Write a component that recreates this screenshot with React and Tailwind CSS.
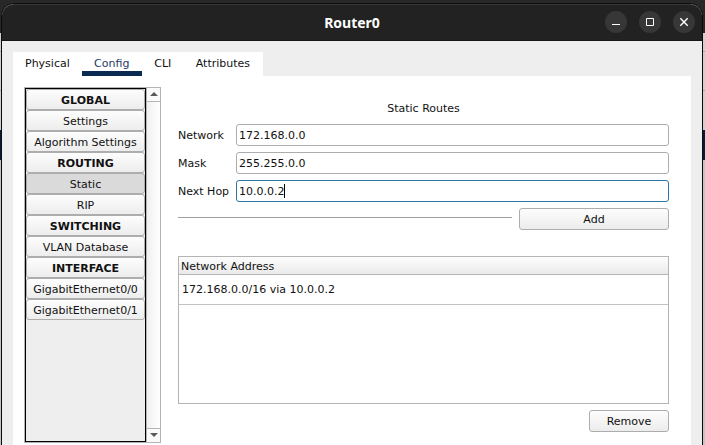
import React, { useState } from "react";

const sections = [
  { title: "GLOBAL", items: ["Settings", "Algorithm Settings"] },
  { title: "ROUTING", items: ["Static", "RIP"] },
  { title: "SWITCHING", items: ["VLAN Database"] },
  { title: "INTERFACE", items: ["GigabitEthernet0/0", "GigabitEthernet0/1"] },
];

const tabs = ["Physical", "Config", "CLI", "Attributes"];

function WindowButton({ label, children }) {
  return (
    <button aria-label={label} className="flex size-[22px] items-center justify-center rounded-full bg-[#373737]">
      <svg width="10" height="10" viewBox="0 0 10 10" fill="none" stroke="#fff">
        {children}
      </svg>
    </button>
  );
}

function TitleBar() {
  return (
    <header className="grid h-[37px] grid-cols-[1fr_auto_1fr] items-center rounded-t-[12px] border-t border-b border-t-[#383838] border-b-[#161616] bg-[#222222] px-[7px] pb-0.5">
      <span />
      <h1 className="pt-0.5 font-['Noto_Sans',sans-serif] text-[14px] leading-5 font-bold text-white">Router0</h1>
      <div className="flex justify-end gap-3">
        <WindowButton label="Minimize">
          <path d="M1 7.5H9" />
        </WindowButton>
        <WindowButton label="Maximize">
          <path d="M1.5 1.5H8.5V8.5H1.5Z" />
        </WindowButton>
        <WindowButton label="Close">
          <path d="M1.3 1.3L8.7 8.7M8.7 1.3L1.3 8.7" strokeWidth="1.4" />
        </WindowButton>
      </div>
    </header>
  );
}

function Tabs() {
  return (
    <nav className="flex h-6 w-[250px] bg-white">
      {tabs.map((tab) => (
        <button
          key={tab}
          className={
            "h-6 border-b-[5px] pt-[5px] leading-[14px] " +
            (tab === "CLI" ? "w-[42px] " : tab === "Config" ? "w-[60px] " : "px-3 ") +
            (tab === "Config" ? "border-[#0b2a52] text-[#1d3a66]" : "border-white")
          }
        >
          {tab}
        </button>
      ))}
    </nav>
  );
}

function Sidebar({ selected, onSelect }) {
  const row = "flex h-[21px] items-center justify-center rounded-[3px] border border-[#adadad] pt-0.5 whitespace-nowrap ";
  const raised = "bg-linear-to-b from-[#fdfdfd] to-[#ededed] ";
  return (
    <aside className="flex w-[137px] shrink-0 border border-[#b4b4b4]">
      <div className="w-[121px] border border-black bg-[#eeeeee]">
        {sections.map((section) => (
          <section key={section.title} className="flex flex-col">
            <h2 className={row + raised + "font-bold"}>{section.title}</h2>
            {section.items.map((item) => (
              <button
                key={item}
                onClick={() => onSelect(item)}
                className={row + (item === selected ? "bg-[#dadada]" : raised)}
              >
                {item}
              </button>
            ))}
          </section>
        ))}
      </div>
      <div className="flex flex-1 flex-col justify-between border-l border-[#b4b4b4] bg-linear-to-r from-[#f0f0f0] to-white">
        <button aria-label="Scroll up" className="flex h-[14px] items-center justify-center border-b border-[#b4b4b4] bg-[#fafafa] pb-0.5">
          <svg width="8" height="4" viewBox="0 0 8 4" fill="#5a5a5a">
            <path d="M0 4L4 0L8 4Z" />
          </svg>
        </button>
        <button aria-label="Scroll down" className="flex h-[14px] items-center justify-center border-t border-[#b4b4b4] bg-[#fafafa] pb-0.5">
          <svg width="8" height="4" viewBox="0 0 8 4" fill="#5a5a5a">
            <path d="M0 0L4 4L8 0Z" />
          </svg>
        </button>
      </div>
    </aside>
  );
}

function Field({ id, label, value, focused }) {
  return (
    <div className="flex items-center">
      <label htmlFor={id} className="w-[58px] shrink-0">
        {label}
      </label>
      <div
        className={
          "relative h-[22px] min-w-0 flex-1 rounded-[3px] border bg-white " +
          (focused ? "border-[#2a76a6]" : "border-[#adadad]")
        }
      >
        <input id={id} defaultValue={value} className="block h-5 w-full bg-transparent px-0.5 outline-none" />
        {focused && (
          <span aria-hidden="true" className="pointer-events-none absolute inset-y-0 left-0.5 flex items-center">
            <span className="invisible">{value}</span>
            <span className="h-3.5 w-px bg-black" />
          </span>
        )}
      </div>
    </div>
  );
}

const pushButton =
  "h-[22px] rounded-[3px] border border-[#adadad] bg-linear-to-b from-[#fdfdfd] to-[#ececec] text-center";

function StaticRoutes() {
  return (
    <main className="flex min-w-0 flex-1 flex-col pt-[14px]">
      <h2 className="text-center leading-[15px]">Static Routes</h2>
      <form className="mt-2 flex flex-col gap-1.5" onSubmit={(e) => e.preventDefault()}>
        <Field id="network" label="Network" value="172.168.0.0" />
        <Field id="mask" label="Mask" value="255.255.0.0" />
        <Field id="next-hop" label="Next Hop" value="10.0.0.2" focused />
        <div className="flex items-center gap-[7px]">
          <hr className="h-1 flex-1 border-t border-[#9f9f9f]" />
          <button className={pushButton + " w-[150px]"}>Add</button>
        </div>
      </form>
      <div className="mt-[26px] h-[148px] border border-[#b4b4b4]">
        <table className="w-full border-separate border-spacing-0 text-left">
          <thead>
            <tr className="bg-linear-to-b from-[#fdfdfd] to-[#e9e9e9]">
              <th className="h-[18px] border-b border-[#b4b4b4] px-0.5 pt-0.5 pb-0 font-normal">Network Address</th>
            </tr>
          </thead>
          <tbody>
            <tr>
              <td className="h-[30px] border-b border-[#c2c2c2] px-[3px] py-0">172.168.0.0/16 via 10.0.0.2</td>
            </tr>
          </tbody>
        </table>
      </div>
      <button className={pushButton + " mt-1.5 w-20 self-end"}>Remove</button>
    </main>
  );
}

export default function App() {
  const [selected, setSelected] = useState("Static");
  return (
    <div className="flex h-screen flex-col overflow-hidden bg-[linear-gradient(to_bottom,#282828_33px,#cfcfcf_33px,#cfcfcf_51px,#a8a8a8_51px,#a8a8a8_52px,#cfcfcf_52px,#cfcfcf_90px,#a8a8a8_90px,#a8a8a8_91px,#cfcfcf_91px,#cfcfcf_130px,#071d3c_130px,#071d3c_160px,#c4c4c8_160px)] pr-[2px] pl-px font-['DejaVu_Sans',sans-serif] text-[11px] leading-[15px] text-[#111111]">
      <div className="mt-[3px] flex flex-1 flex-col rounded-t-[13px] border-x border-t border-[#0c0c0c] bg-[#eeeeee]">
        <TitleBar />
        <div className="flex flex-1 flex-col pt-[11px] pr-[11px] pl-[11px]">
          <Tabs />
          <div className="flex flex-1 gap-[17px] bg-white pt-[11px] pr-[22px] pb-[2px] pl-[11px]">
            <Sidebar selected={selected} onSelect={setSelected} />
            <StaticRoutes />
          </div>
        </div>
      </div>
    </div>
  );
}
